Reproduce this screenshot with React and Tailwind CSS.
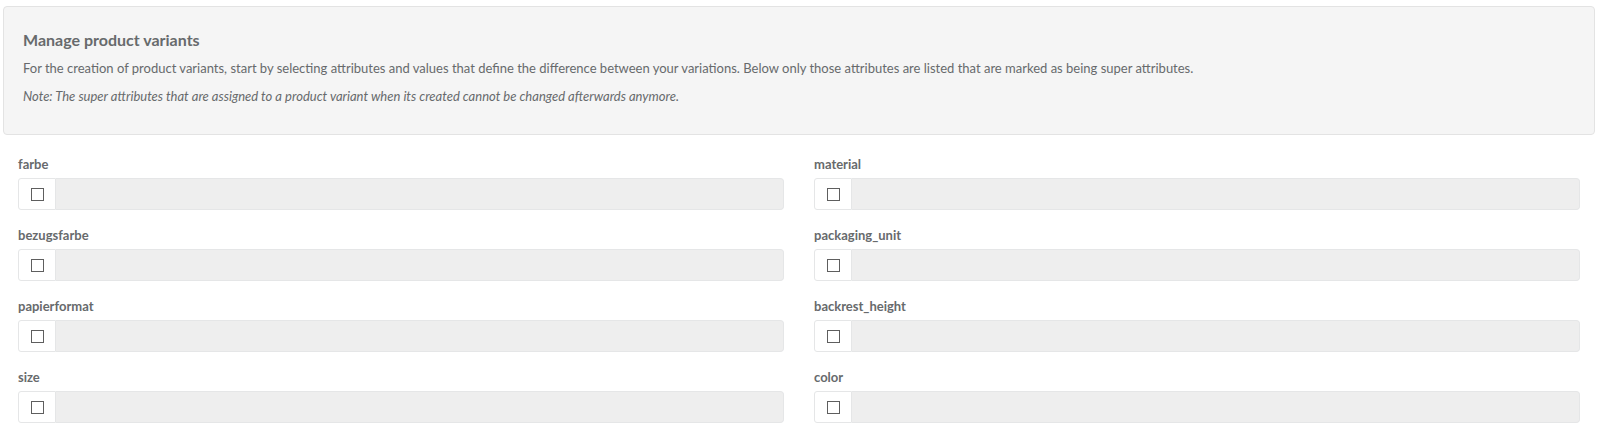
import React from "react";

const attributes = [
  ["farbe", "material"],
  ["bezugsfarbe", "packaging_unit"],
  ["papierformat", "backrest_height"],
  ["size", "color"],
];

const AttributeField = ({ name }) => (
  <div className="px-[15px]">
    <label className="block h-[20px] leading-[20px] pt-[2px] text-[13px] font-bold text-[#676a6c] mb-[6px]">
      {name}
    </label>
    <div className="flex h-[32px]">
      <div className="w-[38px] shrink-0 flex items-center justify-center bg-white border border-[#e5e6e7] rounded-l-[3px]">
        <span className="block w-[13px] h-[13px] border border-[#5e5e5e] bg-white" />
      </div>
      <div className="flex-1 bg-[#eeeeee] border border-l-0 border-[#e5e6e7] rounded-r-[4px]" />
    </div>
  </div>
);

export default function App() {
  return (
    <div
      className="bg-white min-h-[438px] pt-[6px] pl-[3px]"
      style={{ fontFamily: "Lato, 'Open Sans', sans-serif" }}
    >
      <div className="w-[1592px]">
        <div className="bg-[#f5f5f5] border border-[#e3e3e3] rounded-[4px] h-[129px] px-[19px] pt-[23px] text-[#676a6c]">
          <h3 className="text-[16px] font-bold leading-[20px] mb-[9px]">
            Manage product variants
          </h3>
          <p className="text-[13px] leading-[18px] mb-[10px]">
            For the creation of product variants, start by selecting attributes and values that define the difference between your variations. Below only those attributes are listed that are marked as being super attributes.
          </p>
          <p className="text-[13px] leading-[18px] italic">
            Note: The super attributes that are assigned to a product variant when its created cannot be changed afterwards anymore.
          </p>
        </div>
        <div className="grid grid-cols-2 gap-y-[13px] pt-[17px]">
          {attributes.flat().map((name) => (
            <AttributeField key={name} name={name} />
          ))}
        </div>
      </div>
    </div>
  );
}
